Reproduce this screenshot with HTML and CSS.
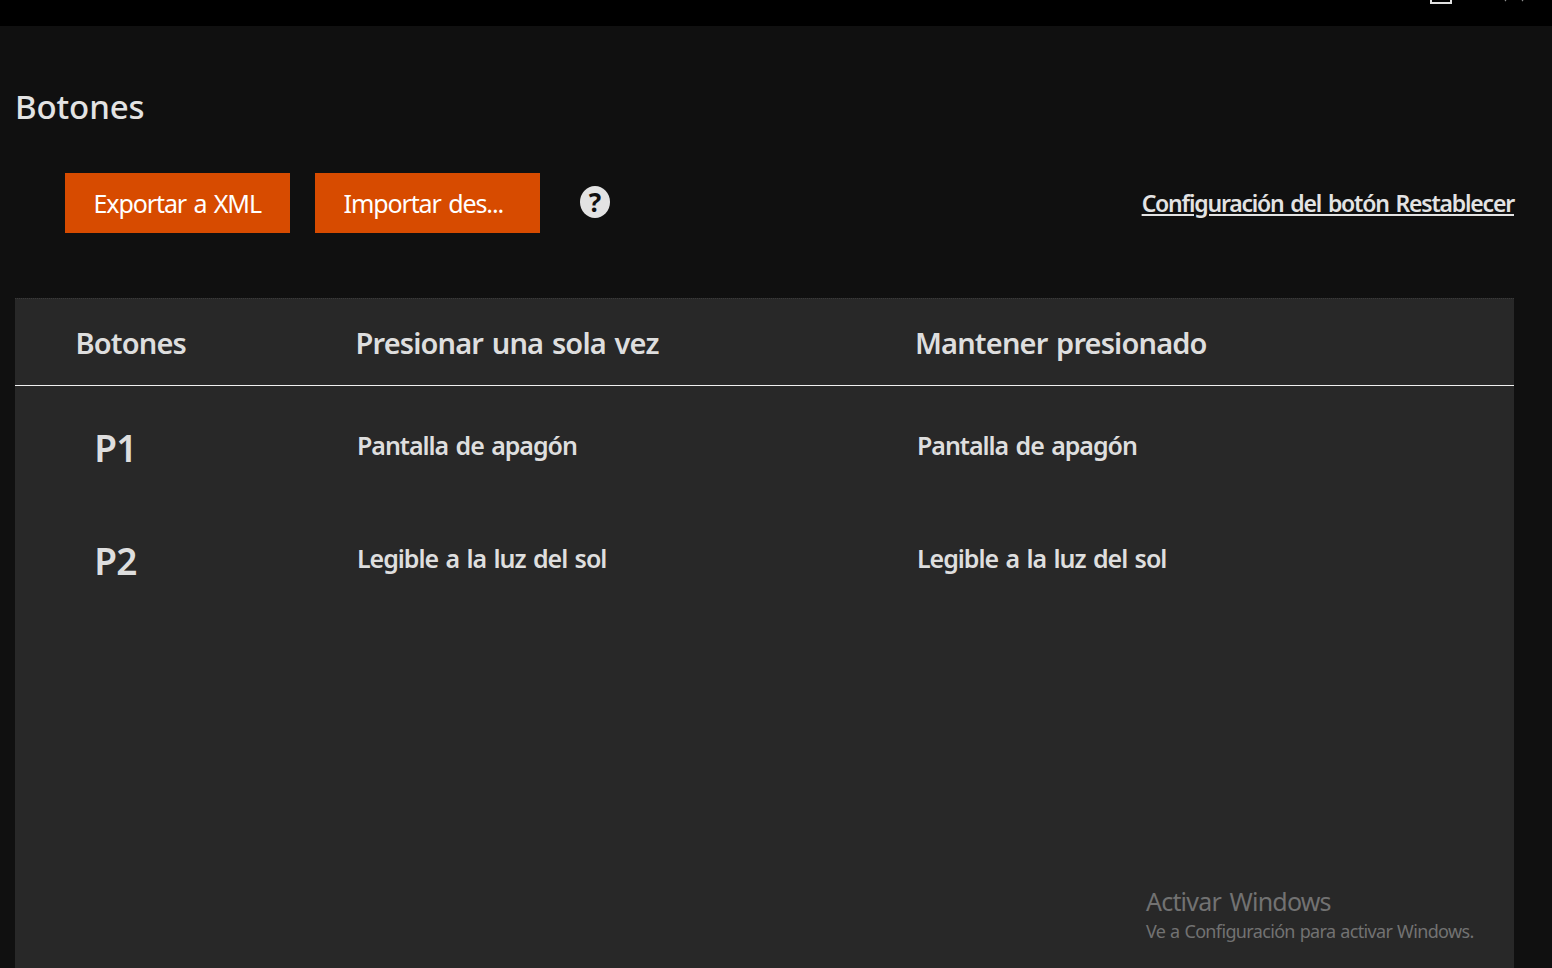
FILE: index.html
```html
<!DOCTYPE html>
<html lang="es">
<head>
<meta charset="utf-8">
<title>Botones</title>
<link rel="stylesheet" href="styles.css">
</head>
<body>
<header class="titlebar">
  <span class="max-icon"></span>
  <svg class="close-icon" width="20" height="2" viewBox="0 0 20 2"><path d="M1 0 2 1M18 1 19 0" stroke="#8a8a8a" stroke-width="1.2" fill="none"/></svg>
</header>
<main class="page">
  <h1 class="title">Botones</h1>
  <div class="toolbar">
    <button class="btn">Exportar a XML</button>
    <button class="btn">Importar des...</button>
    <span class="help">?</span>
    <a class="reset" href="#">Configuración del botón Restablecer</a>
  </div>
  <section class="panel">
    <div class="row head">
      <div class="c1">Botones</div>
      <div class="c2">Presionar una sola vez</div>
      <div class="c3">Mantener presionado</div>
    </div>
    <div class="row item first">
      <div class="c1 key">P1</div>
      <div class="c2">Pantalla de apagón</div>
      <div class="c3">Pantalla de apagón</div>
    </div>
    <div class="row item">
      <div class="c1 key">P2</div>
      <div class="c2">Legible a la luz del sol</div>
      <div class="c3">Legible a la luz del sol</div>
    </div>
  </section>
</main>
<aside class="activate">
  <div class="a1">Activar Windows</div>
  <div class="a2">Ve a Configuración para activar Windows.</div>
</aside>
</body>
</html>
```
FILE: styles.css
```css
* { box-sizing: border-box; }
html, body { margin: 0; height: 968px; overflow: hidden; }
body { background: #101010; color: #e3e3e3; font-family: "Noto Sans", "Open Sans", sans-serif; position: relative; }
.titlebar { height: 26px; background: #000; position: relative; }
.max-icon { position: absolute; left: 1430px; top: -8px; width: 22px; height: 12px; border: 2px solid #e0e0e0; }
.close-icon { position: absolute; left: 1504px; top: 0; }
.page { padding: 0 38px 0 15px; }
.title { margin: 0; padding-top: 58px; height: 147px; font-size: 33px; font-weight: 500; line-height: 46px; letter-spacing: -0.1px; color: #e3e3e3; }
.toolbar { display: flex; align-items: center; height: 60px; padding-left: 50px; }
.btn { width: 225px; height: 60px; margin-right: 25px; border: 0; background: #d74b00; color: #fff; font: 400 25px/34px "Noto Sans", sans-serif; letter-spacing: -1.1px; word-spacing: 2px; padding: 0 0 0 28.5px; text-align: left; }
.help { width: 30px; height: 32px; margin: -2px 0 0 15px; border-radius: 50%; background: #e3e3e3; color: #101010; font-size: 26px; font-weight: 700; line-height: 32px; text-align: center; }
.reset { margin-left: auto; color: #e3e3e3; font-size: 23px; font-weight: 600; line-height: 32px; letter-spacing: -1.2px; word-spacing: 2px; }
.panel { margin-top: 65px; height: 671px; background: #282828; border-top: 1px dotted #3a3a3a; }
.row { display: flex; }
.c1 { width: 340.5px; flex: none; }
.c2 { width: 559.5px; flex: none; }
.head { height: 87px; padding-top: 2px; border-bottom: 1px solid #f0f0f0; align-items: center; font-size: 29px; font-weight: 600; line-height: 40px; letter-spacing: -0.85px; word-spacing: 2px; color: #dedede; }
.head .c1 { padding-left: 60.5px; }
.item { height: 113px; align-items: center; font-size: 25px; font-weight: 600; line-height: 34px; letter-spacing: -1.05px; word-spacing: 2px; color: #dedede; }
.item.first { margin-top: 4px; }
.item .c1 { padding-top: 2px; padding-right: 141px; text-align: center; }
.item .c2, .item .c3 { padding-bottom: 4px; }
.key { font-size: 37px; font-weight: 600; line-height: 50px; width: 342px; letter-spacing: -0.6px; }
.item .c2 { width: 560px; }
.activate { position: absolute; left: 1146px; top: 885px; color: #727272; }
.a1 { font-size: 25px; line-height: 33px; letter-spacing: -0.8px; word-spacing: 3px; }
.a2 { font-size: 18px; line-height: 26px; letter-spacing: -0.65px; word-spacing: 0.8px; }
```
